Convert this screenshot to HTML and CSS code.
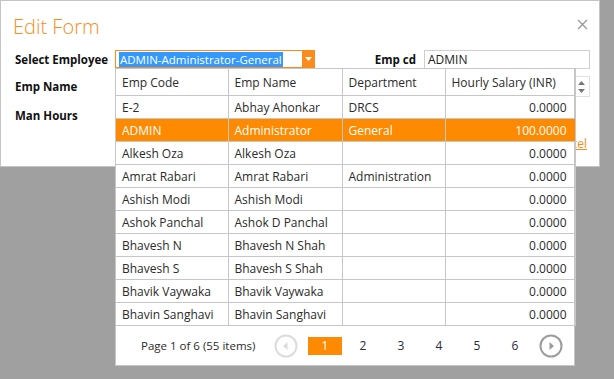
FILE: index.html
```html
<!DOCTYPE html>
<html>
<head>
	<meta charset="utf-8">
	<title>Edit Form</title>
	<link rel="stylesheet" href="styles.css">
</head>
<body>

	<div class="dialog">
		<div class="dlg-head">
			<h1 class="dlg-title">Edit Form</h1>
			<span class="dlg-close">
				<svg width="11" height="11" viewBox="0 0 11 11"><path d="M1 1L10 10M10 1L1 10" stroke="#9a9a9a" stroke-width="1.4" fill="none"/></svg>
			</span>
		</div>

		<div class="form">
			<div class="row">
				<label class="lbl">Select Employee</label>
				<div class="combo">
					<span class="combo-text"><span class="sel">ADMIN-Administrator-General</span></span>
					<span class="combo-btn">
						<svg width="7" height="4" viewBox="0 0 7 4"><path d="M0 0H7L3.5 4Z" fill="#fff"/></svg>
					</span>
				</div>
				<label class="lbl lbl-cd">Emp cd</label>
				<div class="textbox cd">ADMIN</div>
			</div>
			<div class="row row-name">
				<label class="lbl">Emp Name</label>
				<div class="textbox name">
					<span class="spin">
						<svg width="7" height="14" viewBox="0 0 7 14"><path d="M0 5L3.5 1L7 5Z M0 9L3.5 13L7 9Z" fill="#777"/></svg>
					</span>
				</div>
			</div>
			<div class="row">
				<label class="lbl">Man Hours</label>
			</div>
			<div class="actions">
				<a class="link" href="#">Save</a>
				<a class="link" href="#">Cancel</a>
			</div>
		</div>
	</div>

	<!-- combo popup grid -->
	<div class="popup">
		<table class="grid">
			<colgroup>
				<col style="width:112px">
				<col style="width:114px">
				<col style="width:103px">
				<col style="width:130px">
			</colgroup>
			<thead>
				<tr><th>Emp Code</th><th>Emp Name</th><th>Department</th><th>Hourly Salary (INR)</th></tr>
			</thead>
			<tbody>
				<tr><td>E-2</td><td>Abhay Ahonkar</td><td>DRCS</td><td class="num">0.0000</td></tr>
				<tr class="active"><td>ADMIN</td><td>Administrator</td><td>General</td><td class="num">100.0000</td></tr>
				<tr><td>Alkesh Oza</td><td>Alkesh Oza</td><td></td><td class="num">0.0000</td></tr>
				<tr><td>Amrat Rabari</td><td>Amrat Rabari</td><td>Administration</td><td class="num">0.0000</td></tr>
				<tr><td>Ashish Modi</td><td>Ashish Modi</td><td></td><td class="num">0.0000</td></tr>
				<tr><td>Ashok Panchal</td><td>Ashok D Panchal</td><td></td><td class="num">0.0000</td></tr>
				<tr><td>Bhavesh N</td><td>Bhavesh N Shah</td><td></td><td class="num">0.0000</td></tr>
				<tr><td>Bhavesh S</td><td>Bhavesh S Shah</td><td></td><td class="num">0.0000</td></tr>
				<tr><td>Bhavik Vaywaka</td><td>Bhavik Vaywaka</td><td></td><td class="num">0.0000</td></tr>
				<tr><td>Bhavin Sanghavi</td><td>Bhavin Sanghavi</td><td></td><td class="num">0.0000</td></tr>
			</tbody>
		</table>
		<div class="pager">
			<span class="pager-info">Page 1 of 6 (55 items)</span>
			<span class="pg-arrow off">
				<svg width="24" height="24" viewBox="0 0 24 24"><circle cx="12" cy="12" r="10.5" stroke="#dcdcdc" stroke-width="2" fill="none"/><path d="M13.5 8V16L9 12Z" fill="#dcdcdc"/></svg>
			</span>
			<span class="pg cur">1</span>
			<span class="pg">2</span>
			<span class="pg">3</span>
			<span class="pg">4</span>
			<span class="pg">5</span>
			<span class="pg">6</span>
			<span class="pg-arrow next">
				<svg width="24" height="24" viewBox="0 0 24 24"><circle cx="12" cy="12" r="10.5" stroke="#9c9c9c" stroke-width="2" fill="none"/><path d="M10.5 8V16L15 12Z" fill="#9c9c9c"/></svg>
			</span>
		</div>
	</div>

</body>
</html>
```

FILE: styles.css
```css
* {
	padding: 0;
	margin: 0;
	box-sizing: border-box;
}
body {
	background-color: #a0a0a0;
	font-family: "Open Sans", "Liberation Sans", sans-serif;
	font-size: 12px;
	color: #2b2b2b;
}
.dialog {
	width: 600px;
	height: 167px;
	background-color: #fff;
	border: 1px solid #c4c4c4;
	padding: 0 9px 0 14px;
}
.dlg-head {
	display: flex;
	justify-content: space-between;
	align-items: center;
	height: 48px;
	padding-top: 2px;
}
.dlg-title {
	font-weight: 300;
	font-size: 20px;
	color: #fb8c1b;
	margin-left: -2px;
}
.dlg-close {
	display: flex;
	margin-right: 2px;
	margin-top: -4px;
}
.form {
	display: flex;
	flex-direction: column;
}
.row {
	display: flex;
	align-items: center;
	height: 29px;
}
.row:first-child {
	height: 20px;
	margin-bottom: 3px;
}
.lbl {
	width: 100px;
	font-weight: bold;
	color: #111;
	font-size: 11.5px;
}
.combo {
	display: flex;
	width: 200px;
	height: 18px;
	border: 1px solid #fb8c1b;
	border-right: 0;
}
.combo-text {
	flex: 1;
	padding: 1px 3px;
	line-height: 15px;
}
.sel {
	background-color: #3399ff;
	color: #fff;
	padding: 0 1px;
	font-size: 11.5px;
}
.combo-btn {
	width: 13px;
	background-color: #fb8c1b;
	display: flex;
	align-items: center;
	justify-content: center;
}
.lbl-cd {
	width: 109px;
	text-align: right;
	padding-right: 8px;
}
.textbox {
	height: 19px;
	border: 1px solid #cfcfcf;
	padding: 0 3px;
	line-height: 17px;
	color: #222;
}
.cd {
	width: 166px;
}
.name {
	flex: 1;
	height: 21px;
	display: flex;
	justify-content: flex-end;
	border-color: #e0e0e0;
	padding: 0;
}
.spin {
	width: 16px;
	border-left: 1px solid #cfcfcf;
	display: flex;
	align-items: center;
	justify-content: center;
}
.actions {
	display: flex;
	justify-content: flex-end;
	gap: 10px;
	padding-right: 3px;
	margin-top: 5px;
}
.link {
	color: #fb8c1b;
	font-size: 12px;
}

/* popup */
.popup {
	position: absolute;
	left: 115px;
	top: 68px;
	width: 460px;
	background-color: #fff;
	border: 1px solid #c6c6c6;
	border-top: 0;
}
.grid {
	border-collapse: collapse;
	table-layout: fixed;
	width: 459px;
}
.grid th,
.grid td {
	border: 1px solid #c6c6c6;
	text-align: left;
	font-weight: normal;
	white-space: nowrap;
	overflow: hidden;
	padding: 0 6px;
	color: #2b2b2b;
}
.grid tr > :first-child {
	border-left: 0;
}
.grid th {
	height: 27px;
}
.grid td {
	height: 23px;
}
.grid td.num {
	text-align: right;
	padding-right: 8px;
}
.grid tr.active td {
	background-color: #fd8a00;
	color: #fff;
}
.pager {
	display: flex;
	align-items: center;
	height: 39px;
	padding-left: 25px;
}
.pager-info {
	width: 133px;
	white-space: nowrap;
	font-size: 11.5px;
}
.pg-arrow {
	display: flex;
}
.pg-arrow.off {
	margin-right: 10px;
}
.pg-arrow.next {
	margin-left: 3px;
}
.pg {
	width: 34px;
	height: 18px;
	line-height: 18px;
	text-align: center;
	margin-right: 4px;
	color: #2a2a3a;
}
.pg.cur {
	background-color: #fd8a00;
	color: #fff;
}
```
